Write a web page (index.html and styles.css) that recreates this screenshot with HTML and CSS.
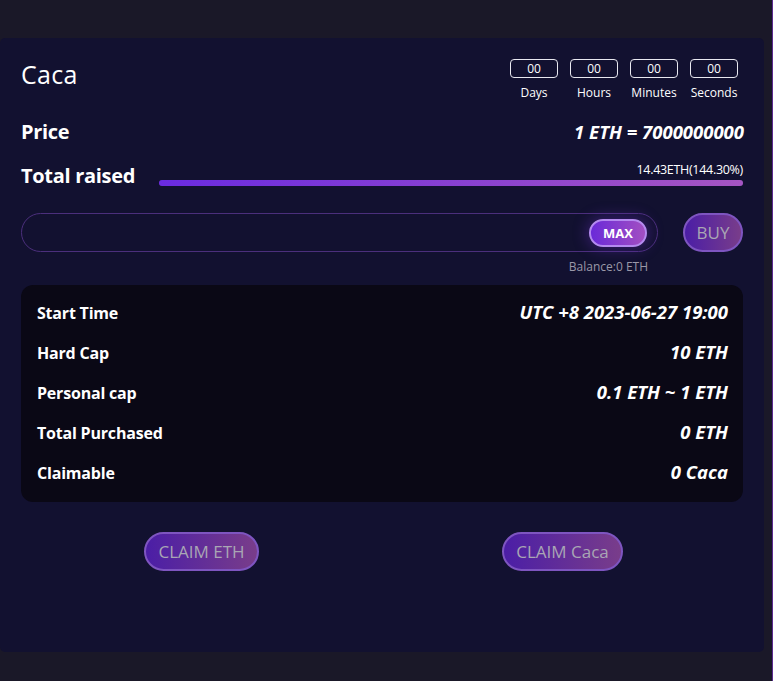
FILE: index.html
```html
<!DOCTYPE html>
<html>
<head>
<meta charset="utf-8">
<link rel="stylesheet" href="styles.css">
</head>
<body>
<div class="page">
  <div class="card">
    <div class="head">
      <div class="title">Caca</div>
      <div class="countdown">
        <div class="unit"><div class="box">00</div><div class="lbl">Days</div></div>
        <div class="unit"><div class="box">00</div><div class="lbl">Hours</div></div>
        <div class="unit"><div class="box">00</div><div class="lbl">Minutes</div></div>
        <div class="unit"><div class="box">00</div><div class="lbl">Seconds</div></div>
      </div>
    </div>
    <div class="row price">
      <div class="k">Price</div>
      <div class="v">1 ETH = 7000000000</div>
    </div>
    <div class="raised">
      <div class="k">Total raised</div>
      <div class="progress">
        <div class="ptext">14.43ETH(144.30%)</div>
        <div class="track"><div class="fill" style="width:100%"></div></div>
      </div>
    </div>
    <div class="buyrow">
      <div class="inputwrap">
        <div class="input"><span class="max">MAX</span></div>
        <div class="balance">Balance:0 ETH</div>
      </div>
      <span class="btn buy">BUY</span>
    </div>
    <div class="info">
      <div class="irow"><span class="ik">Start Time</span><span class="iv">UTC +8 2023-06-27 19:00</span></div>
      <div class="irow"><span class="ik">Hard Cap</span><span class="iv">10 ETH</span></div>
      <div class="irow"><span class="ik">Personal cap</span><span class="iv">0.1 ETH ~ 1 ETH</span></div>
      <div class="irow"><span class="ik">Total Purchased</span><span class="iv">0 ETH</span></div>
      <div class="irow"><span class="ik">Claimable</span><span class="iv">0 Caca</span></div>
    </div>
    <div class="claims">
      <div class="cc"><span class="btn claim">CLAIM ETH</span></div>
      <div class="cc"><span class="btn claim">CLAIM Caca</span></div>
    </div>
  </div>
</div>
</body>
</html>
```
FILE: styles.css
```css
html, body {
  margin: 0;
  padding: 0;
  background: #1a1828;
  height: 100%;
}
body {
  font-family: "Open Sans", "Noto Sans", sans-serif;
  color: #fff;
  overflow: hidden;
}
.page {
  height: 681px;
  padding-top: 38px;
  box-sizing: border-box;
  border-right: 1px solid #5b2a8f;
  width: 773px;
}
.card {
  width: 764px;
  height: 614px;
  background: #121130;
  border-radius: 5px;
  box-sizing: border-box;
  padding: 20px 21px 0 21px;
}
.head {
  display: flex;
  justify-content: space-between;
  align-items: flex-start;
}
.title {
  font-size: 25px;
  margin-top: 0;
  line-height: 32px;
  letter-spacing: 0.3px;
}
.countdown {
  display: flex;
  gap: 12px;
  margin-right: 5px;
  margin-top: 1px;
}
.unit {
  width: 48px;
  display: flex;
  flex-direction: column;
  align-items: center;
}
.box {
  width: 48px;
  height: 19px;
  box-sizing: border-box;
  border: 1px solid #e8e8f0;
  border-radius: 4px;
  font-size: 12px;
  line-height: 17px;
  text-align: center;
}
.lbl {
  font-size: 12px;
  margin-top: 7px;
  line-height: 16px;
}
.row {
  display: flex;
  justify-content: space-between;
  align-items: center;
}
.price {
  margin-top: 17px;
}
.k {
  font-size: 20px;
  font-weight: 700;
  letter-spacing: -0.3px;
}
.price .v {
  font-size: 18.5px;
  font-weight: 700;
  font-style: italic;
  letter-spacing: 0;
  margin-right: -1px;
}
.raised {
  display: flex;
  align-items: flex-end;
  margin-top: 18px;
  gap: 24px;
}
.raised .k {
  font-size: 20px;
  line-height: 26px;
  margin-bottom: -3px;
}
.progress {
  flex: 1;
  display: flex;
  flex-direction: column;
  align-items: flex-end;
  padding-bottom: 0;
}
.ptext {
  font-size: 12.5px;
  line-height: 14px;
  letter-spacing: -0.3px;
  margin-bottom: 3px;
}
.track {
  width: 100%;
  height: 6px;
  border-radius: 3px;
  background: #2a2450;
}
.fill {
  height: 6px;
  border-radius: 3px;
  background: linear-gradient(90deg, #6a2be0, #a555c2);
}
.buyrow {
  display: flex;
  justify-content: space-between;
  align-items: flex-start;
  margin-top: 27px;
}
.inputwrap {
  width: 637px;
  display: flex;
  flex-direction: column;
  align-items: flex-end;
}
.input {
  width: 637px;
  height: 39px;
  box-sizing: border-box;
  border: 1.5px solid #4b2f7c;
  border-radius: 20px;
  display: flex;
  justify-content: flex-end;
  align-items: center;
  padding-right: 10px;
}
.max {
  width: 58px;
  height: 28px;
  box-sizing: border-box;
  border: 2px solid #b48af0;
  border-radius: 14px;
  background: linear-gradient(90deg, #6a2ad8, #a24fc2);
  font-size: 13px;
  font-weight: 700;
  display: flex;
  align-items: center;
  justify-content: center;
  box-shadow: 0 0 14px 3px rgba(110, 50, 200, 0.35);
}
.balance {
  font-size: 12px;
  color: #9a98a8;
  margin-top: 6px;
  margin-right: 10px;
}
.btn {
  display: flex;
  align-items: center;
  justify-content: center;
  box-sizing: border-box;
  border: 2px solid #7e55c0;
  background: linear-gradient(90deg, #4b1ea6, #793d8a);
  color: #a9a6b4;
  font-size: 17px;
  border-radius: 20px;
  height: 39px;
}
.buy {
  width: 60px;
}
.info {
  margin-top: 10px;
  background: #0a0815;
  border-radius: 12px;
  padding: 7px 15px 10px 16px;
}
.irow {
  display: flex;
  justify-content: space-between;
  align-items: baseline;
  height: 40px;
  line-height: 40px;
}
.ik {
  font-size: 16px;
  font-weight: 700;
  letter-spacing: -0.2px;
}
.iv {
  font-size: 18.5px;
  font-weight: 700;
  font-style: italic;
  letter-spacing: 0;
}
.claims {
  display: flex;
  margin-top: 30px;
}
.cc {
  flex: 1;
  display: flex;
  justify-content: center;
}
.claim {
  padding: 0 12px;
}
```
